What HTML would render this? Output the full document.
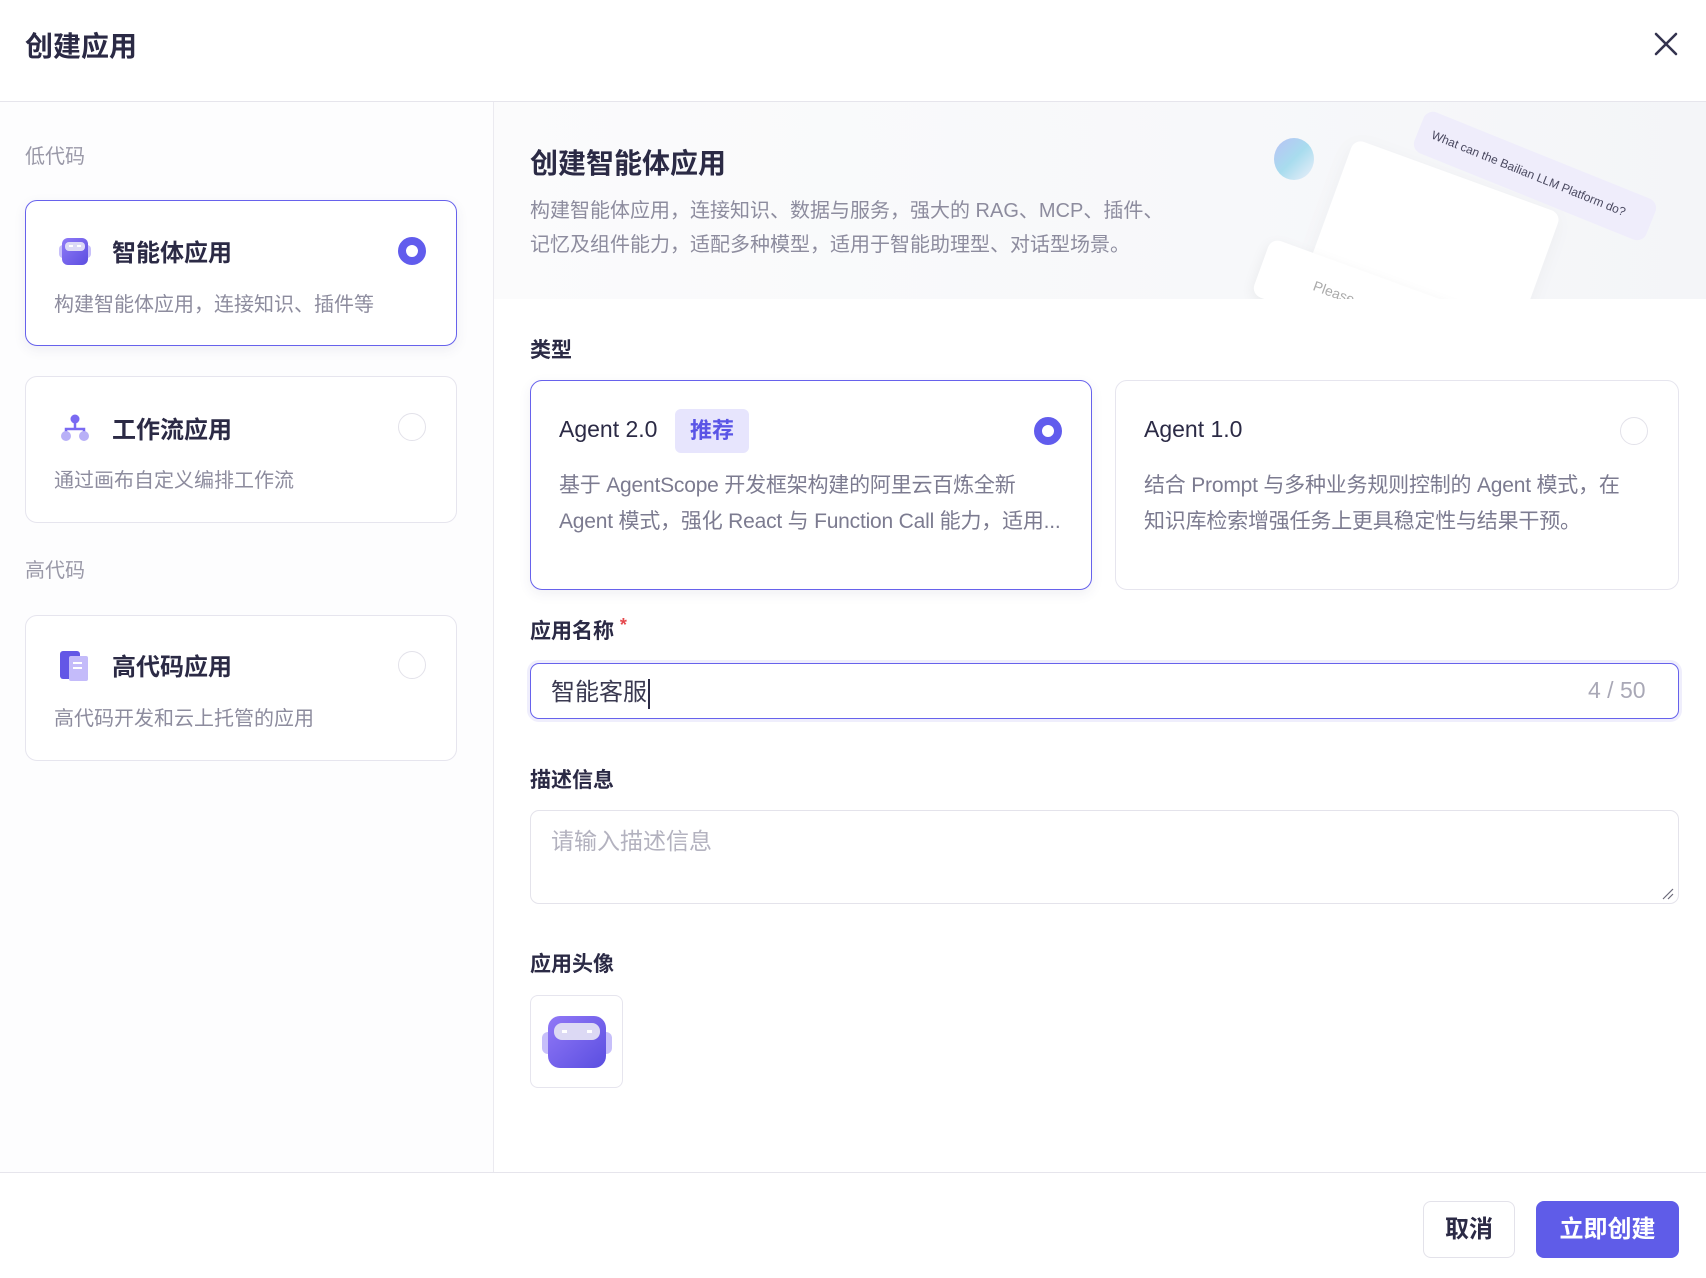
<!DOCTYPE html>
<html><head><meta charset="utf-8">
<style>
*{margin:0;padding:0;box-sizing:border-box}
body{width:1706px;height:1278px;background:#fff;font-family:"Liberation Sans","Noto Sans CJK SC",sans-serif;color:#2b2a45;position:relative;overflow:hidden}
.a{position:absolute;white-space:nowrap}
.card{position:absolute;border:1px solid #e6e5ee;border-radius:12px;background:#fff}
.sel{border:1.5px solid #6762ec;box-shadow:0 4px 12px rgba(60,60,120,.08)}
.radio{position:absolute;width:28px;height:28px;border-radius:50%;border:1.5px solid #e3e2ea;background:#fff}
.radio.on{border:8px solid #615ced}
.ttl{font-size:24px;font-weight:bold;color:#2b2a45}
.desc{font-size:20px;color:#8d8c9e}
.lbl{font-size:21px;font-weight:bold;color:#2b2a45}
</style></head><body>
<div class="a" style="left:25px;top:25px;font-size:28px;font-weight:bold">创建应用</div>
<svg class="a" style="left:1654px;top:32px" width="24" height="24" viewBox="0 0 24 24"><path d="M2 2L22 22M22 2L2 22" stroke="#34334f" stroke-width="2.6" stroke-linecap="round"/></svg>
<div class="a" style="left:0;top:101px;width:1706px;height:1px;background:#e6e5ec"></div>
<div class="a" style="left:493px;top:102px;width:1px;height:1070px;background:#ebeaf0"></div>
<div class="a" style="left:0;top:102px;width:493px;height:1070px;background:#fdfdfe"></div>

<div class="a" style="left:25px;top:140px;font-size:20px;color:#9a99a8">低代码</div>
<div class="card sel" style="left:25px;top:200px;width:432px;height:146px"></div>
<svg class="a" style="left:59px;top:238px" width="32" height="27" viewBox="0 0 32 27"><defs><linearGradient id="g1" x1="0" y1="0" x2="1" y2="1"><stop offset="0" stop-color="#8f7af7"/><stop offset="1" stop-color="#5c4ee0"/></linearGradient></defs><rect x="0" y="7" width="32" height="13" rx="4" fill="#c8c0fa"/><rect x="3" y="0" width="26" height="27" rx="6" fill="url(#g1)"/><rect x="6" y="4" width="20" height="9" rx="4" fill="#dcd9f6"/><rect x="10" y="7" width="4" height="2" fill="#fff"/><rect x="18" y="7" width="4" height="2" fill="#fff"/></svg>
<div class="a ttl" style="left:112px;top:233px">智能体应用</div>
<div class="radio on" style="left:398px;top:237px"></div>
<div class="a desc" style="left:54px;top:288px">构建智能体应用，连接知识、插件等</div>

<div class="card" style="left:25px;top:376px;width:432px;height:147px"></div>
<svg class="a" style="left:60px;top:414px" width="30" height="28" viewBox="0 0 30 28"><circle cx="15" cy="5" r="4.5" fill="#7a6af2"/><path d="M15 9V15M6 21V15H24V21" stroke="#7a6af2" stroke-width="2.5" fill="none"/><circle cx="6" cy="22" r="5" fill="#b8b0f7"/><circle cx="24" cy="22" r="5" fill="#b8b0f7"/></svg>
<div class="a ttl" style="left:112px;top:410px">工作流应用</div>
<div class="radio" style="left:398px;top:413px"></div>
<div class="a desc" style="left:54px;top:464px">通过画布自定义编排工作流</div>

<div class="a" style="left:25px;top:554px;font-size:20px;color:#9a99a8">高代码</div>
<div class="card" style="left:25px;top:615px;width:432px;height:146px"></div>
<svg class="a" style="left:60px;top:651px" width="29" height="30" viewBox="0 0 29 30"><rect x="0" y="0" width="20" height="28" rx="3" fill="#6357e6"/><rect x="9" y="5" width="19" height="25" rx="2" fill="#c4bbfa"/><rect x="13" y="11" width="9" height="2" fill="#fff"/><rect x="13" y="16" width="9" height="2" fill="#fff"/></svg>
<div class="a ttl" style="left:112px;top:647px">高代码应用</div>
<div class="radio" style="left:398px;top:651px"></div>
<div class="a desc" style="left:54px;top:702px">高代码开发和云上托管的应用</div>

<!-- banner -->
<div class="a" style="left:494px;top:102px;width:1212px;height:197px;overflow:hidden;background:linear-gradient(90deg,#fbfbfc 0%,#f7f8fa 60%,#f4f5f8 100%)">
<div class="a" style="left:780px;top:36px;width:40px;height:42px;border-radius:50%;background:linear-gradient(135deg,#b9c2f5,#a8dcee 50%,#eef0fa)"></div>
<div class="a" style="left:830px;top:70px;width:220px;height:140px;background:#fff;transform:rotate(20deg);border-radius:10px;box-shadow:0 4px 20px rgba(0,0,0,.04)"></div>
<div class="a" style="left:760px;top:175px;width:240px;height:60px;background:#fff;transform:rotate(20deg);border-radius:10px;box-shadow:0 4px 14px rgba(0,0,0,.06);font-size:14px;color:#aaa;line-height:60px;padding-left:56px">Please</div>
<div class="a" style="left:916px;top:52px;width:250px;height:44px;background:#efedfb;border-radius:10px;transform:rotate(22deg);font-size:12px;color:#4a4960;line-height:44px;padding-left:14px">What can the Bailian LLM Platform do?</div>
</div>
<div class="a" style="left:530px;top:142px;font-size:28px;font-weight:bold">创建智能体应用</div>
<div class="a desc" style="left:530px;top:194px;line-height:34px">构建智能体应用，连接知识、数据与服务，强大的 RAG、MCP、插件、<br>记忆及组件能力，适配多种模型，适用于智能助理型、对话型场景。</div>

<div class="a lbl" style="left:530px;top:334px">类型</div>
<div class="card sel" style="left:530px;top:380px;width:562px;height:210px"></div>
<div class="a" style="left:559px;top:416px;font-size:23px;color:#2b2a45">Agent 2.0</div>
<div class="a" style="left:675px;top:409px;width:74px;height:44px;background:#e7e5fd;border-radius:6px;color:#5a55e6;font-size:22px;font-weight:bold;text-align:center;line-height:44px">推荐</div>
<div class="radio on" style="left:1034px;top:417px"></div>
<div class="a" style="left:559px;top:468px;font-size:21px;color:#7c7b90;line-height:36px;letter-spacing:-0.2px">基于 AgentScope 开发框架构建的阿里云百炼全新<br>Agent 模式，强化 React 与 Function Call 能力，适用...</div>

<div class="card" style="left:1115px;top:380px;width:564px;height:210px"></div>
<div class="a" style="left:1144px;top:416px;font-size:23px;color:#2b2a45">Agent 1.0</div>
<div class="radio" style="left:1620px;top:417px"></div>
<div class="a" style="left:1144px;top:468px;font-size:21px;color:#7c7b90;line-height:36px;letter-spacing:-0.2px">结合 Prompt 与多种业务规则控制的 Agent 模式，在<br>知识库检索增强任务上更具稳定性与结果干预。</div>

<div class="a lbl" style="left:530px;top:615px">应用名称 <span style="color:#e5484d;font-size:18px;vertical-align:top">*</span></div>
<div class="a" style="left:530px;top:663px;width:1149px;height:56px;border:1.5px solid #6762ec;border-radius:9px;box-shadow:0 0 0 3px #efeefc;background:#fff"></div>
<div class="a" style="left:551px;top:672px;font-size:24px;color:#3a3950">智能客服<span style="display:inline-block;width:2px;height:30px;background:#2b2a45;vertical-align:middle;margin-left:1px"></span></div>
<div class="a" style="left:1588px;top:677px;font-size:23px;color:#a9a8b6">4 / 50</div>

<div class="a lbl" style="left:530px;top:764px">描述信息</div>
<div class="a" style="left:530px;top:810px;width:1149px;height:94px;border:1px solid #e4e3eb;border-radius:9px;background:#fff"></div>
<div class="a" style="left:551px;top:822px;font-size:23px;color:#b3b2bf">请输入描述信息</div>
<svg class="a" style="left:1662px;top:888px" width="12" height="12" viewBox="0 0 12 12"><path d="M1 11L11 1M6 11L11 6" stroke="#6b6a7a" stroke-width="1.2"/></svg>

<div class="a lbl" style="left:530px;top:948px">应用头像</div>
<div class="a" style="left:530px;top:995px;width:93px;height:93px;border:1px solid #e6e5ee;border-radius:8px;background:#fff"></div>
<svg class="a" style="left:542px;top:1016px" width="70" height="52" viewBox="0 0 70 52"><defs><linearGradient id="g2" x1="0" y1="0" x2="1" y2="1"><stop offset="0" stop-color="#9178f7"/><stop offset="1" stop-color="#5a4ee0"/></linearGradient></defs><rect x="0" y="16" width="70" height="22" rx="6" fill="#c7bffa"/><rect x="6" y="0" width="58" height="52" rx="12" fill="url(#g2)"/><rect x="12" y="7" width="46" height="17" rx="8" fill="#dcd9f4"/><rect x="20" y="14" width="5" height="3" fill="#fff"/><rect x="45" y="14" width="5" height="3" fill="#fff"/></svg>

<div class="a" style="left:0;top:1172px;width:1706px;height:1px;background:#e6e5ec"></div>
<div class="a" style="left:1423px;top:1201px;width:92px;height:57px;border:1px solid #e3e2ea;border-radius:8px;background:#fff;font-size:24px;font-weight:bold;color:#2b2a45;text-align:center;line-height:55px">取消</div>
<div class="a" style="left:1536px;top:1201px;width:143px;height:57px;border-radius:8px;background:#5f5ce8;font-size:24px;font-weight:bold;color:#fff;text-align:center;line-height:57px">立即创建</div>
</body></html>
